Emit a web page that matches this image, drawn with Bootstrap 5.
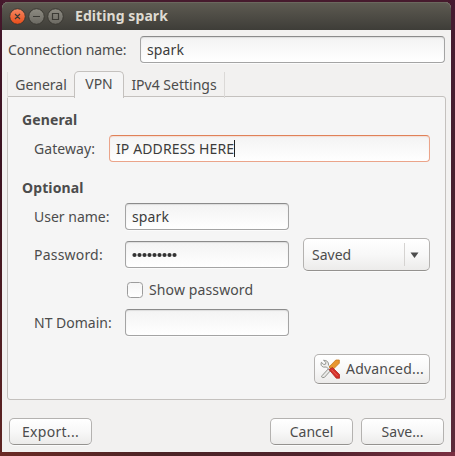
<!DOCTYPE html>
<html lang="en">
<head>
<meta charset="utf-8">
<meta name="viewport" content="width=device-width, initial-scale=1">
<title>Editing spark</title>
<link href="https://cdn.jsdelivr.net/npm/bootstrap@5.3.0/dist/css/bootstrap.min.css" rel="stylesheet">
<style>
body{width:455px;height:456px;overflow:hidden;padding:2px 4px 4px 2px;background:linear-gradient(90deg,#6b2a25 0,#4c2426 35%,#50232d 70%,#7a2f42 100%) 0 100%/100% 4px no-repeat,linear-gradient(#451a30,#47202f 40%,#5c2a3a) 100% 0/4px 100% no-repeat,linear-gradient(#45182c,#3b1220 35%,#5e2422) 0 0/3px 100% no-repeat,#461a2d;font-family:"Noto Sans","Open Sans",sans-serif;font-size:14px;line-height:20px;color:#4c4c4c}
.window{width:449px;height:450px;background:#f2f1f0;border-radius:6px 6px 0 0}
.titlebar{height:28px;padding-left:7px;background:linear-gradient(#5e5b52,#3e3d38);border-radius:6px 6px 0 0;box-shadow:inset 0 1px #6b685e;color:#dfdbd2;font-weight:700}
.titlebar svg{display:block}
.title-text{margin-left:9px;letter-spacing:.08px}
.entry{height:27px;border:1px solid #a4a4a4;border-top-color:#8b8b8b;border-radius:4px;padding:0 6px;background:linear-gradient(#f3f3f3,#fff);box-shadow:inset 0 1px 1px #ddd,0 1px #fbfbfb;color:#3c3c3c;font-size:14px;line-height:25px;letter-spacing:.12px}
.entry:focus{outline:0}
.entry-active{border-color:#eba48a;border-top-color:#e08158;box-shadow:inset 0 1px 1px #f3ded5}
.caret{width:1px;height:17px;background:#222}
.short{width:164px}
.name-row{height:34px;margin-top:6px;padding:0 6px}
.name-label{width:132px;letter-spacing:-.09px}
.tab-strip{height:27px;padding-left:5px}
.tab-strip .nav-link{height:26px;padding:3px 0 0;border:0;border-radius:0;color:#4c4c4c;text-align:center;background:none}
.tab-strip .tab-general{width:67px;border-left:1px solid #e1dfdd}
.tab-strip .nav-link.active{width:50px;height:27px;padding-top:2px;border:1px solid #c4c1be;border-bottom:0;border-radius:5px 5px 0 0;background:#f5f5f5;color:#4c4c4c}
.tab-strip .tab-ip{width:101px;border-right:1px solid #dbd9d7}
.strip-z{z-index:1}
.pane{width:439px;height:304px;margin:-1px 0 0 5px;padding:13px 15px 0 14px;border:1px solid #c4c1be;border-radius:0 3px 3px 3px;background:#f5f5f5}
.heading{height:25px;font-weight:700;letter-spacing:.12px}
.indent{padding-left:12px}
.field-label{width:91px;white-space:nowrap}
.pass-label{letter-spacing:.2px}
.gateway-label{width:75px;letter-spacing:.08px}
.choice{width:127px;height:33px;padding:0 0 0 8px}
.push{border:1px solid #b4b2b0;border-bottom-color:#94928f;border-radius:5px;background:linear-gradient(#fff,#f8f8f8 50%,#ecebea);box-shadow:inset 0 1px #fff,0 1px #fbfbfb;color:#4c4c4c;font-size:14px;line-height:20px}
.divider{width:1px;height:23px;background:#d5d3d1}
.arrow-cell{width:24px;padding-left:5px}
.tick{width:16px;height:16px;margin:0;border:1px solid #9c9c9c;border-radius:4px;background:linear-gradient(#f5f5f5,#fff)}
.check-row{margin:11px 0;padding-left:105px;height:16px}
.show-label{padding-left:6px;letter-spacing:.12px}
.advanced{width:116px;height:30px;margin-top:18px;padding:0 0 0 4px}
.adv-text{margin-left:5px;letter-spacing:.2px}
.footer-bar{padding:18px 7px 0 7px}
.footer-bar .push{width:83px;height:27px;padding:0}
.wide-text{letter-spacing:.3px}
</style>
</head>
<body>
<main class="window">
  <header class="titlebar d-flex align-items-center">
    <svg width="57" height="20" viewBox="0 0 57 20" role="img" aria-label="Window controls">
      <defs>
        <linearGradient id="close" x1="0" y1="0" x2="0" y2="1"><stop stop-color="#f58762"/><stop offset="1" stop-color="#e84c18"/></linearGradient>
        <linearGradient id="grey" x1="0" y1="0" x2="0" y2="1"><stop stop-color="#8d8b82"/><stop offset="1" stop-color="#6b6962"/></linearGradient>
      </defs>
      <g stroke="#3a3832"><circle cx="8.5" cy="10.5" r="7.8" fill="url(#close)"/><circle cx="27.5" cy="10.5" r="7.8" fill="url(#grey)"/><circle cx="46.5" cy="10.5" r="7.8" fill="url(#grey)"/></g>
      <g fill="none" stroke="#3b3a35" stroke-width="1.2"><path d="M6 8l5 5M11 8l-5 5M24 10.5h7M43.5 7.5h6v6h-6z"/></g>
    </svg>
    <span class="title-text">Editing spark</span>
  </header>
  <div class="name-row d-flex align-items-start">
    <label class="name-label pt-1" for="conn">Connection name:</label>
    <input id="conn" class="entry flex-fill" value="spark">
  </div>
  <nav class="tab-strip nav nav-tabs border-0 align-items-end position-relative strip-z">
    <a class="nav-link tab-general" href="#">General</a>
    <a class="nav-link active" href="#">VPN</a>
    <a class="nav-link tab-ip" href="#">IPv4 Settings</a>
  </nav>
  <section class="pane">
    <div class="heading">General</div>
    <div class="indent d-flex align-items-center mb-3">
      <span class="gateway-label">Gateway:</span>
      <div class="entry entry-active flex-fill d-flex align-items-center"><span>IP ADDRESS HERE</span><span class="caret"></span></div>
    </div>
    <div class="heading">Optional</div>
    <div class="indent d-flex align-items-center">
      <label class="field-label" for="user">User name:</label><input id="user" class="entry short" value="spark">
    </div>
    <div class="indent d-flex align-items-center mt-2">
      <span class="field-label pass-label">Password:</span>
      <div class="entry short d-flex align-items-center"><svg width="46" height="6" role="img" aria-label="Hidden password"><g fill="#333"><circle cx="2.500" cy="3" r="2.100"/><circle cx="7.500" cy="3" r="2.100"/><circle cx="12.500" cy="3" r="2.100"/><circle cx="17.500" cy="3" r="2.100"/><circle cx="22.500" cy="3" r="2.100"/><circle cx="27.500" cy="3" r="2.100"/><circle cx="32.500" cy="3" r="2.100"/><circle cx="37.500" cy="3" r="2.100"/><circle cx="42.500" cy="3" r="2.100"/></g></svg></div>
      <button class="push choice ms-auto d-flex align-items-center" type="button"><span>Saved</span><span class="divider ms-auto"></span><span class="arrow-cell d-flex"><svg width="9" height="6"><path d="M.5.5h8L4.500 6z" fill="#4c4c4c"/></svg></span></button>
    </div>
    <div class="check-row d-flex align-items-center">
      <input id="show" class="form-check-input tick" type="checkbox"><label class="show-label" for="show">Show password</label>
    </div>
    <div class="indent d-flex align-items-center">
      <label class="field-label" for="domain">NT Domain:</label><input id="domain" class="entry short">
    </div>
    <button class="push advanced ms-auto d-flex align-items-center" type="button">
      <svg width="22" height="22" viewBox="0 0 22 22">
        <path d="M3.200 17.500L11 9l2 2-7.500 8.300Q3.500 20.200 2.500 18.800z" fill="#e9e9e7" stroke="#888a85" stroke-width=".9"/>
        <path d="M4.500 2.300L7 4.500 6.500 6.200 4.800 6.500 2.400 4.300Q1 8 4.600 9.100L7.500 9l5 5 2-2-5-4.800Q9.800 2.200 4.500 2.300z" fill="#f0f0ee" stroke="#888a85" stroke-width=".9"/>
        <path d="M16.800 2h3.500v3.200L13.500 12l-3.500-3z" fill="#e8962f" stroke="#c57a1e" stroke-width=".8"/>
        <path d="M10 11.500l3.500-2 7 7v3.700h-3.200z" fill="#d3302a" stroke="#b0241f" stroke-width=".8"/>
        <path d="M12.500 11.800l6 6" stroke="#ee675c" stroke-width=".9"/>
      </svg><span class="adv-text">Advanced...</span>
    </button>
  </section>
  <footer class="footer-bar d-flex gap-2">
    <button class="push wide-text me-auto" type="button">Export...</button>
    <button class="push" type="button">Cancel</button>
    <button class="push" type="button">Save...</button>
  </footer>
</main>
<script src="https://cdn.jsdelivr.net/npm/bootstrap@5.3.0/dist/js/bootstrap.bundle.min.js"></script>
</body>
</html>
